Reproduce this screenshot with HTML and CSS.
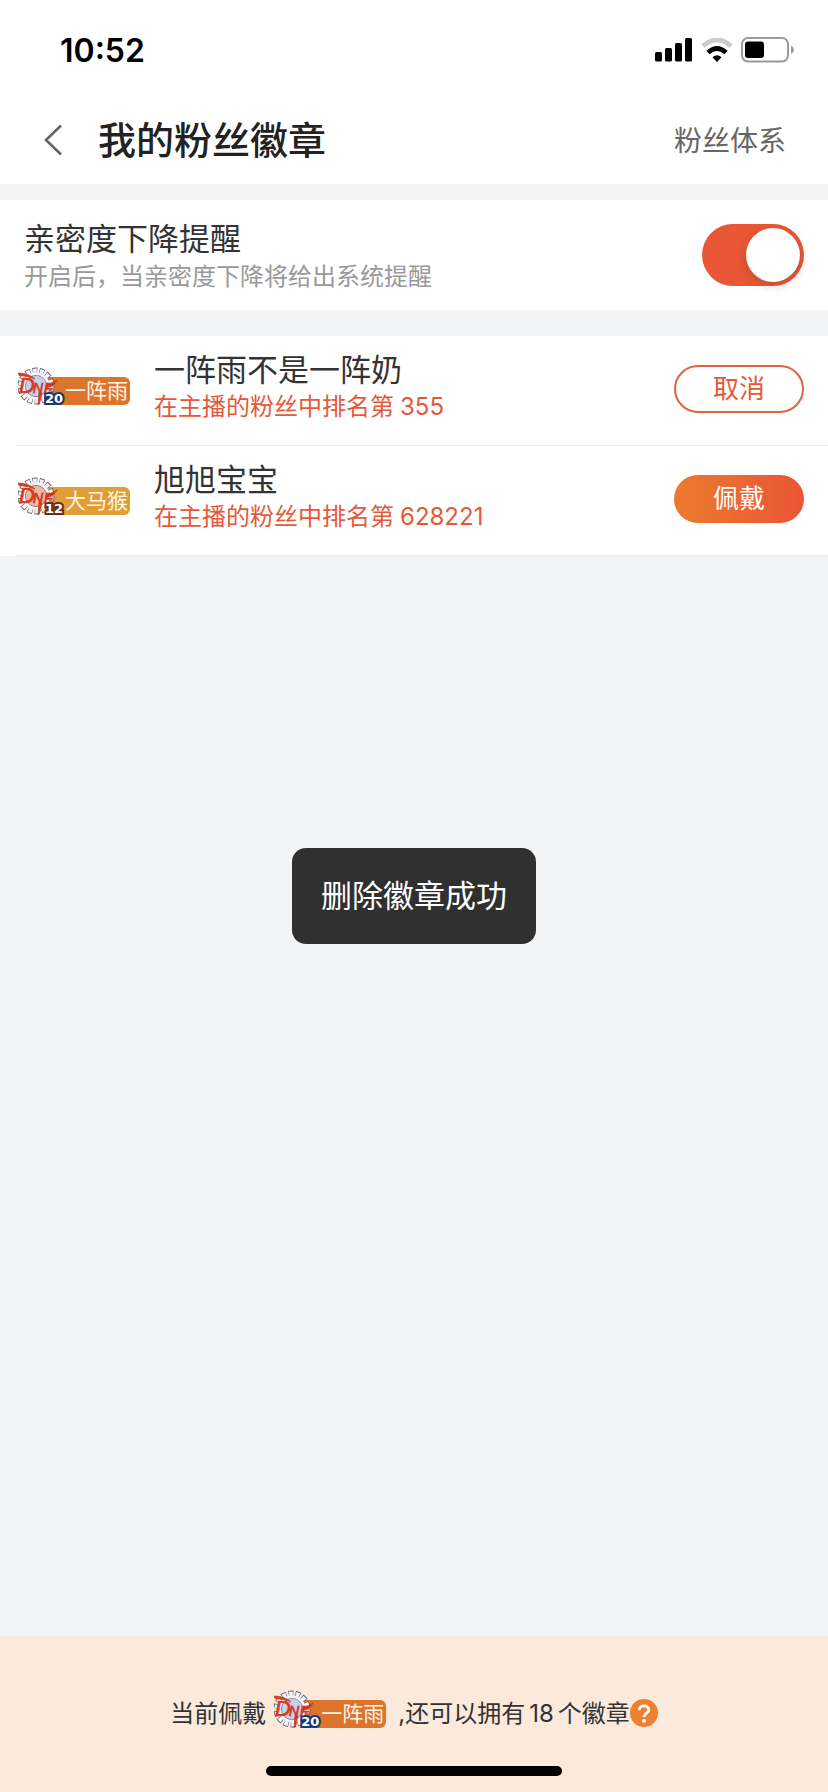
FILE: index.html
```html
<!DOCTYPE html>
<html lang="zh-CN">
<head>
<meta charset="utf-8">
<meta name="viewport" content="width=device-width, initial-scale=1">
<title>我的粉丝徽章</title>
<link rel="stylesheet" href="styles.css">
</head>
<body>
<header class="top">
  <div class="status">
    <time class="clock">10:52</time>
    <div class="status-icons">
      <svg width="38" height="24" viewBox="0 0 38 24" aria-hidden="true"><rect y="14" width="7" height="9.500" rx="1.500"/><rect x="10" y="10" width="7" height="13.500" rx="1.500"/><rect x="20" y="5" width="7" height="18.500" rx="1.500"/><rect x="30" y="0" width="7" height="23.500" rx="1.500"/></svg>
      <svg width="32" height="24" viewBox="0 0 32 24" fill="none" aria-hidden="true"><path d="M2 8Q16 -4 30 8" stroke="#ccc" stroke-width="5"/><path d="M7 14.500Q16 6.500 25 14.500" stroke="#000" stroke-width="4.800"/><path d="M11.500 19.200Q16 15.500 20.500 19.200L16 24Z" fill="#000"/></svg>
      <svg width="54" height="26" viewBox="0 0 54 26" aria-hidden="true"><rect x="1" y="1" width="46" height="23.500" rx="6" fill="none" stroke="#999" stroke-width="2"/><rect x="4" y="4.500" width="19" height="16.500" rx="3"/><path d="M50 8.500Q53 10 53 12.800Q53 15.500 50 17Z" fill="#999"/></svg>
    </div>
  </div>
  <nav class="nav">
    <button class="back" type="button" aria-label="返回"><svg width="18" height="32" viewBox="0 0 18 32" fill="none" stroke="#666" stroke-width="2.600"><path d="M17 1.500L2 16L17 30.500"/></svg></button>
    <h1 class="title">我的粉丝徽章</h1>
    <a class="system" href="#">粉丝体系</a>
  </nav>
</header>

<main class="main">
  <section class="panel setting">
    <label class="texts" for="remind">
      <span class="name">亲密度下降提醒</span>
      <span class="hint">开启后，当亲密度下降将给出系统提醒</span>
    </label>
    <input class="switch" id="remind" type="checkbox" role="switch" checked>
  </section>

  <ul class="panel list">
    <li class="row">
      <span class="badge badge-orange">
        <svg class="emblem" width="46" height="38" viewBox="0 0 46 38" aria-hidden="true">
          <circle class="teeth-edge" cx="18" cy="19" r="15" pathLength="140"/>
          <circle class="teeth" cx="18" cy="19" r="14.8" pathLength="140"/>
          <circle class="rim" cx="18" cy="19" r="13.6"/>
          <circle class="core" cx="18" cy="19" r="10.6"/>
          <g class="brush"><path d="M0 6C6 6 13 8 17 12C13 10 7 9 1 8.500Z"/><path d="M21 25L24 26L22 35L20 38Z"/><path d="M28 18C32 17 36 15 39 13C37 17 33 20 28 20.500Z"/><text x="1" y="26" font-size="22">D</text><text x="15" y="26" font-size="14">N</text><text x="26" y="26" font-size="15">F</text></g>
        </svg>
        <span class="level">20</span>
        <span class="badge-name">一阵雨</span>
      </span>
      <div class="texts">
        <span class="name">一阵雨不是一阵奶</span>
        <span class="rank">在主播的粉丝中排名第<span class="num">355</span></span>
      </div>
      <button class="pill pill-line" type="button">取消</button>
    </li>
    <li class="row">
      <span class="badge badge-gold">
        <svg class="emblem" width="46" height="38" viewBox="0 0 46 38" aria-hidden="true">
          <circle class="teeth-edge" cx="18" cy="19" r="15" pathLength="140"/>
          <circle class="teeth" cx="18" cy="19" r="14.8" pathLength="140"/>
          <circle class="rim" cx="18" cy="19" r="13.6"/>
          <circle class="core" cx="18" cy="19" r="10.6"/>
          <g class="brush"><path d="M0 6C6 6 13 8 17 12C13 10 7 9 1 8.500Z"/><path d="M21 25L24 26L22 35L20 38Z"/><path d="M28 18C32 17 36 15 39 13C37 17 33 20 28 20.500Z"/><text x="1" y="26" font-size="22">D</text><text x="15" y="26" font-size="14">N</text><text x="26" y="26" font-size="15">F</text></g>
        </svg>
        <span class="level">12</span>
        <span class="badge-name">大马猴</span>
      </span>
      <div class="texts">
        <span class="name">旭旭宝宝</span>
        <span class="rank">在主播的粉丝中排名第<span class="num">628221</span></span>
      </div>
      <button class="pill pill-fill" type="button">佩戴</button>
    </li>
  </ul>
</main>

<footer class="footer">
  <div class="current">
    <span>当前佩戴</span>
    <span class="badge badge-orange">
      <svg class="emblem" width="46" height="38" viewBox="0 0 46 38" aria-hidden="true">
        <circle class="teeth-edge" cx="18" cy="19" r="15" pathLength="140"/>
        <circle class="teeth" cx="18" cy="19" r="14.8" pathLength="140"/>
        <circle class="rim" cx="18" cy="19" r="13.6"/>
        <circle class="core" cx="18" cy="19" r="10.6"/>
        <g class="brush"><path d="M0 6C6 6 13 8 17 12C13 10 7 9 1 8.500Z"/><path d="M21 25L24 26L22 35L20 38Z"/><path d="M28 18C32 17 36 15 39 13C37 17 33 20 28 20.500Z"/><text x="1" y="26" font-size="22">D</text><text x="15" y="26" font-size="14">N</text><text x="26" y="26" font-size="15">F</text></g>
      </svg>
      <span class="level">20</span>
      <span class="badge-name">一阵雨</span>
    </span>
    <span class="remain">,还可以拥有<span class="num">18</span>个徽章</span>
    <button class="help" type="button" aria-label="帮助"><svg width="28" height="28" viewBox="0 0 28 28" fill="none"><circle cx="14" cy="14" r="14" fill="#ee8131"/><path d="M9.200 11.200C9.200 5.600 18.800 5.600 18.800 11C18.800 14 14 14.200 14 18" stroke="#fff" stroke-width="2.800"/><circle cx="14" cy="21.800" r="1.900" fill="#fff"/></svg></button>
  </div>
  <div class="home-bar"></div>
</footer>

<div class="toast" role="status">删除徽章成功</div>
</body>
</html>
```
FILE: styles.css
```css
* { box-sizing: border-box; }

body {
  margin: 0;
  min-height: 100vh;
  display: flex;
  flex-direction: column;
  background: #f3f4f6;
  color: #333;
  font-family: Inter, "Noto Sans CJK SC", sans-serif;
  font-weight: 400;
}

button {
  font: inherit;
  border: 0;
  background: none;
  padding: 0;
}

.top { background: #fff; }

.status {
  display: flex;
  align-items: center;
  justify-content: space-between;
  height: 96px;
  padding: 4px 33px 0 60px;
}
.clock { color: #000; font-size: 32px; font-weight: 600; }
.status-icons { display: flex; align-items: center; gap: 8px; }

.nav {
  display: flex;
  align-items: center;
  height: 88px;
  padding: 0 42px 0 44px;
}
.back { display: flex; width: 54px; }
.title {
  flex: 1;
  margin: 0;
  color: #222;
  font-size: 38px;
  font-weight: 500;
  line-height: 56px;
}
.system {
  padding-top: 2px;
  color: #666;
  font-size: 28px;
  line-height: 40px;
  text-decoration: none;
}

.main { flex: 1; padding-top: 16px; }
.panel { background: #fff; }
.texts { flex: 1; display: flex; flex-direction: column; }
.name { font-size: 31px; line-height: 38px; }

.setting {
  display: flex;
  align-items: center;
  min-height: 110px;
  padding: 0 24px;
}
.setting .texts { padding-top: 6px; }
.hint { color: #999; font-size: 24px; line-height: 38px; }

.switch {
  appearance: none;
  display: flex;
  align-items: center;
  justify-content: flex-end;
  width: 102px;
  height: 62px;
  margin: 0;
  padding: 4px;
  border-radius: 31px;
  background: #ea5736;
}
.switch::before {
  content: "";
  width: 54px;
  height: 54px;
  border-radius: 50%;
  background: #fff;
  box-shadow: 0 3px 10px rgba(90, 60, 20, 0.3);
}
.switch:not(:checked) { justify-content: flex-start; background: #ddd; }

.list { list-style: none; margin: 26px 0 0; padding: 0; }
.row {
  display: flex;
  align-items: center;
  min-height: 110px;
  padding: 0 24px 4px 18px;
  background: linear-gradient(#e9eaec, #e9eaec) 16px 100% / 100% 1px no-repeat;
}
.row .badge { margin: 0 24px 6px 0; }
.row .texts { padding-bottom: 2px; }
.rank { color: #e5593a; font-size: 24px; line-height: 36px; }
.row .num { margin-left: 6px; }

.badge {
  position: relative;
  display: inline-flex;
  align-items: flex-end;
  width: 112px;
  height: 38px;
}
.emblem { position: relative; z-index: 1; flex: none; fill: none; }
.teeth-edge { stroke: #5b5f78; stroke-width: 7; stroke-dasharray: 7 3; }
.teeth { stroke: #f6f6fb; stroke-width: 5.6; stroke-dasharray: 5.4 4.6; stroke-dashoffset: -0.8; }
.rim { fill: #f4f4fa; }
.core { fill: #c9d0ea; stroke: #8d8ca8; }
.badge-gold .core { fill: #efb79d; stroke: #b07a70; }
.brush {
  fill: #e2381c;
  stroke: #a02314;
  stroke-width: 0.6;
  paint-order: stroke;
  font-family: "Liberation Sans", sans-serif;
  font-style: italic;
  font-weight: 400;
}
.badge-name {
  flex: 1;
  margin-left: -18px;
  padding-left: 19px;
  border-radius: 0 6px 6px 0;
  color: #fff6e6;
  font-size: 21px;
  line-height: 28px;
  white-space: nowrap;
}
.badge-orange .badge-name { background: #dc742b; }
.badge-gold .badge-name { background: #e29e36; }
.level {
  position: absolute;
  z-index: 2;
  right: 67px;
  bottom: 0;
  color: #fff;
  font-family: "DejaVu Sans", sans-serif;
  font-size: 13px;
  font-weight: 700;
  line-height: 12px;
  -webkit-text-stroke: 4px #19376f;
  paint-order: stroke fill;
}
.badge-gold .level { -webkit-text-stroke-color: #6e2c1c; }

.pill {
  width: 130px;
  height: 48px;
  border-radius: 24px;
  font-size: 26px;
  line-height: 44px;
}
.pill-line { border: 2px solid #df6241; color: #e5593a; }
.pill-fill { background: linear-gradient(90deg, #ec7a2c, #ea5536); color: #fff; }

.footer {
  display: flex;
  flex-direction: column;
  align-items: center;
  justify-content: space-between;
  min-height: 156px;
  padding: 54px 24px 16px;
  background: #fbeadc;
}
.current {
  display: flex;
  align-items: flex-end;
  font-size: 24px;
  line-height: 28px;
}
.current .badge { margin: 0 12px 0 8px; }
.current .num { margin: 0 4px; }
.help { display: flex; margin-bottom: 1px; }
.home-bar {
  width: 296px;
  height: 10px;
  border-radius: 5px;
  background: #000;
}

.toast {
  position: fixed;
  top: 50%;
  left: 50%;
  transform: translate(-50%, -50%);
  padding: 26px 29px;
  border-radius: 14px;
  background: #303030;
  color: #fff;
  font-size: 31px;
  line-height: 44px;
  white-space: nowrap;
}
```
